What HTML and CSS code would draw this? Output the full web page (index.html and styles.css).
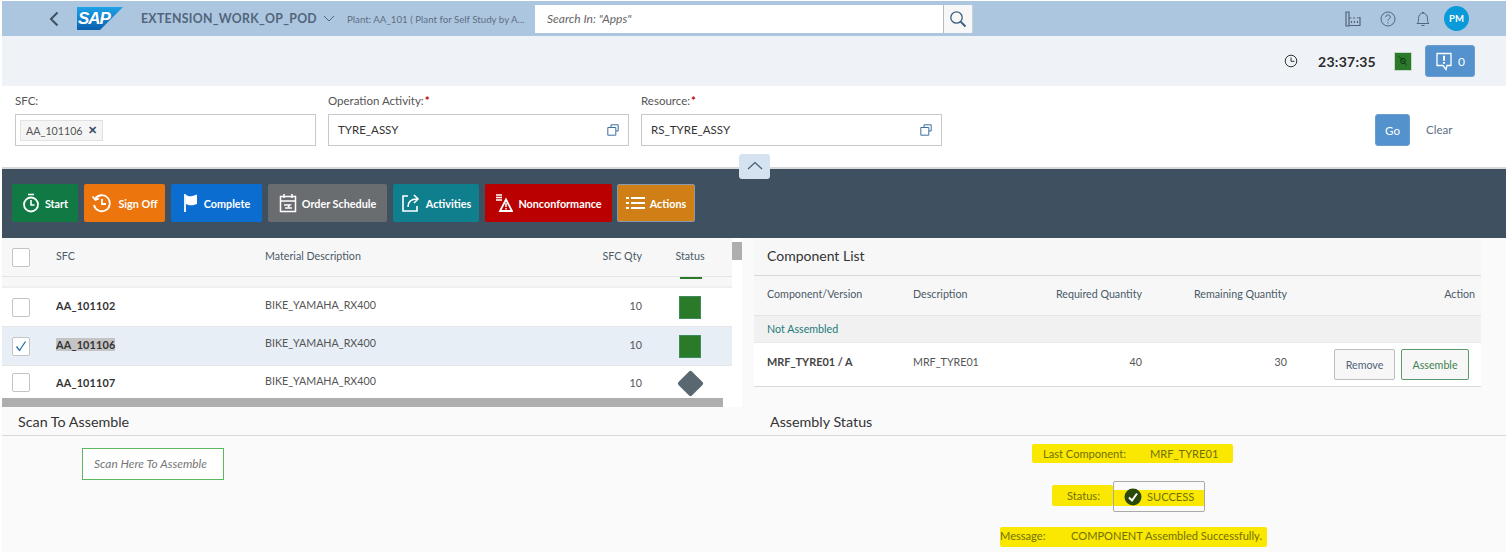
FILE: index.html
```html
<!DOCTYPE html>
<html lang="en">
<head>
<meta charset="utf-8">
<title>EXTENSION_WORK_OP_POD</title>
<link rel="stylesheet" href="styles.css">
</head>
<body>
<div class="page">
  <header class="shell">
    <svg class="back" viewBox="0 0 10 16" width="10" height="16"><path d="M8.5 1.5 2 8l6.5 6.5" fill="none" stroke="#3f5060" stroke-width="2"/></svg>
    <svg class="logo" viewBox="0 0 46 23" width="46" height="23">
      <defs><linearGradient id="sapg" x1="0" y1="0" x2="0" y2="1"><stop offset="0" stop-color="#1ea3e6"/><stop offset="1" stop-color="#0a5fb0"/></linearGradient></defs>
      <polygon points="0,0 46,0 23,23 0,23" fill="url(#sapg)"/>
      <text x="1" y="17" class="logo-text">SAP</text>
    </svg>
    <span class="app-title">EXTENSION_WORK_OP_POD</span>
    <svg class="title-caret" viewBox="0 0 12 7" width="12" height="7"><path d="M1 1l5 5 5-5" fill="none" stroke="#52657a" stroke-width="1"/></svg>
    <span class="plant">Plant: AA_101 ( Plant for Self Study by A...</span>
    <div class="search">
      <span class="search-text">Search In: "Apps"</span>
      <span class="search-btn"><svg viewBox="0 0 18 18" width="18" height="18"><circle cx="7.5" cy="7.5" r="5.7" fill="none" stroke="#3f5f80" stroke-width="1.3"/><path d="M11.6 11.6 16.5 16.5" stroke="#3f5f80" stroke-width="2"/></svg></span>
    </div>
    <div class="shell-right">
      <svg class="ic-factory" viewBox="0 0 16 16" width="16" height="16"><path d="M1 1h3v14H1zM4 14.500h11V6.500h-1.500M4 7h2.500M8 7h2M12 7h1M6.500 10v2M9.500 10v2M12.500 10v2" fill="none" stroke="#52657a" stroke-width="1.200"/></svg>
      <svg class="ic-help" viewBox="0 0 16 16" width="16" height="16"><circle cx="8" cy="8" r="7" fill="none" stroke="#52657a"/><path d="M5.800 6.200c0-3 4.500-3 4.500-.2 0 1.800-2.300 1.800-2.300 3.800M8 11.200v1.300" fill="none" stroke="#52657a"/></svg>
      <svg class="ic-bell" viewBox="0 0 14 16" width="14" height="16"><path d="M1 12.500c1.500-1 1.500-2.500 1.500-5C2.500 4.500 4.500 2 7 2s4.500 2.500 4.500 5.500c0 2.500 0 4 1.500 5zM6 1.500h2M5.500 14.500h3" fill="none" stroke="#52657a"/></svg>
      <span class="avatar">PM</span>
    </div>
  </header>

  <div class="subheader">
    <svg viewBox="0 0 14 14" width="14" height="14"><circle cx="7" cy="7" r="5.800" fill="none" stroke="#333"/><path d="M7 3.500V7.300H10.500" fill="none" stroke="#333"/></svg>
    <span class="clock">23:37:35</span>
    <span class="conn"><svg viewBox="0 0 18 18" width="18" height="18"><path d="M4 3 14 15" stroke="#12301a"/><ellipse cx="9" cy="9" rx="3" ry="3.500" fill="none" stroke="#12301a" stroke-width="1.200"/></svg></span>
    <button class="msg-btn"><svg viewBox="0 0 18 19" width="18" height="19"><path d="M2 1.500h14v12h-4l-1 4-3-4H2z" fill="none" stroke="#fff" stroke-width="1.300"/><path d="M9 3.800v5M9 10v1.800" stroke="#fff" stroke-width="2"/></svg><span>0</span></button>
  </div>

  <section class="filter">
    <div class="field">
      <label class="field-label">SFC:</label>
      <div class="input"><span class="token">AA_101106 <b class="token-x">✕</b></span></div>
    </div>
    <div class="field">
      <label class="field-label">Operation Activity:<em class="req">*</em></label>
      <div class="input"><span class="value">TYRE_ASSY</span><svg class="vh" viewBox="0 0 12 12" width="12" height="12"><path d="M4 3V.8h7.200V7H9M.8 3.500h8v7.700h-8z" fill="none" stroke="#3f6f9f"/></svg></div>
    </div>
    <div class="field">
      <label class="field-label">Resource:<em class="req">*</em></label>
      <div class="input"><span class="value">RS_TYRE_ASSY</span><svg class="vh" viewBox="0 0 12 12" width="12" height="12"><path d="M4 3V.8h7.200V7H9M.8 3.500h8v7.700h-8z" fill="none" stroke="#3f6f9f"/></svg></div>
    </div>
    <div class="filter-actions">
      <button class="go">Go</button>
      <span class="clear">Clear</span>
    </div>
  </section>
  <div class="rule"></div>
  <button class="collapse"><svg viewBox="0 0 16 9" width="16" height="9"><path d="M1 8 8 1.500 15 8" fill="none" stroke="#42586e" stroke-width="1.100"/></svg></button>

  <nav class="toolbar">
    <button class="act a-start"><svg viewBox="0 0 18 20" width="18" height="20"><circle cx="9" cy="11.500" r="7" fill="none" stroke="#fff" stroke-width="1.800"/><path d="M6 1.500h6M9 7v5h3.500" fill="none" stroke="#fff" stroke-width="1.600"/></svg>Start</button>
    <button class="act a-sign"><svg viewBox="0 0 22 20" width="22" height="20"><path d="M4 6a8 8 0 1 1-1 6M1.500 3.500 4.500 7 8 5.500M11 6v5h4" fill="none" stroke="#fff" stroke-width="1.800"/></svg>Sign Off</button>
    <button class="act a-complete"><svg viewBox="0 0 16 20" width="16" height="20"><path d="M2 1v18" stroke="#fff" stroke-width="1.800"/><path d="M3 2c3 1.500 5 2 11-.5V11c-5 2-8 1.500-11 0z" fill="#fff"/></svg>Complete</button>
    <button class="act a-order"><svg viewBox="0 0 18 20" width="18" height="20"><path d="M1.500 3.500h15v15h-15zM1.500 8h15M5 1v4M13 1v4M5 12h6l-2 2M13 15H6" fill="none" stroke="#fff" stroke-width="1.500"/></svg>Order Schedule</button>
    <button class="act a-activity"><svg viewBox="0 0 20 20" width="20" height="20"><path d="M7 3H2v15h14v-5M7 14c0-5 3-8 9-8M13 2l4 4-4 4" fill="none" stroke="#fff" stroke-width="1.600"/></svg>Activities</button>
    <button class="act a-nc"><svg viewBox="0 0 18 18" width="18" height="18"><path d="M1 1h6M1 3.500h6M1 6h6" stroke="#fff" stroke-width="1.500"/><path d="M11 5.500 17 17H5z" fill="none" stroke="#fff" stroke-width="1.800"/><path d="M11 9v4M11 14v1.600" stroke="#fff" stroke-width="1.500"/></svg>Nonconformance</button>
    <button class="act a-actions"><svg viewBox="0 0 19 14" width="19" height="14"><path d="M0 2h3M0 7h3M0 12h3M5 2h14M5 7h14M5 12h14" stroke="#fff" stroke-width="2"/></svg>Actions</button>
  </nav>

  <div class="panels">
    <div class="worklist">
      <div class="wl-main">
        <div class="wl-row wl-head">
          <span class="cb"></span><span class="hd">SFC</span><span class="hd">Material Description</span><span class="hd num">SFC Qty</span><span class="hd center">Status</span>
        </div>
        <div class="wl-clip"><span class="clip-mark"></span></div>
        <div class="wl-row wl-item">
          <span class="cb"></span><strong>AA_101102</strong><span class="mat">BIKE_YAMAHA_RX400</span><span class="num">10</span><span class="center"><i class="sq"></i></span>
        </div>
        <div class="wl-row wl-item selected">
          <span class="cb"><svg viewBox="0 0 12 12" width="12" height="12"><path d="M1.500 6.500 4.500 10.500 10.500 1.500" fill="none" stroke="#2b6ca3" stroke-width="1.300"/></svg></span><strong><mark class="sel-text">AA_101106</mark></strong><span class="mat">BIKE_YAMAHA_RX400</span><span class="num">10</span><span class="center"><i class="sq"></i></span>
        </div>
        <div class="wl-row wl-item last">
          <span class="cb"></span><strong>AA_101107</strong><span class="mat">BIKE_YAMAHA_RX400</span><span class="num">10</span><span class="center"><i class="diamond"></i></span>
        </div>
        <div class="hscroll"></div>
      </div>
      <div class="vscroll"><i></i></div>
    </div>

    <div class="components">
      <div class="cp-title">Component List</div>
      <div class="cp-row cp-head"><span>Component/Version</span><span>Description</span><span class="num">Required Quantity</span><span class="num">Remaining Quantity</span><span class="num">Action</span></div>
      <div class="cp-group">Not Assembled</div>
      <div class="cp-row cp-item"><strong>MRF_TYRE01 / A</strong><span>MRF_TYRE01</span><span class="num">40</span><span class="num">30</span>
        <span class="cp-actions"><button class="btn-plain">Remove</button><button class="btn-green">Assemble</button></span>
      </div>
    </div>
  </div>

  <div class="heads">
    <h2 class="head-l">Scan To Assemble</h2>
    <h2 class="head-r">Assembly Status</h2>
  </div>

  <div class="bottom">
    <div class="scan-col"><div class="scan">Scan Here To Assemble</div></div>
    <div class="status-col">
      <div class="line-last"><mark class="hl hl-last"><span class="k-last">Last Component:</span>MRF_TYRE01</mark></div>
      <div class="line-status"><mark class="hl hl-status"><span class="k-status">Status:</span></mark><span class="status-box"><svg viewBox="0 0 18 18" width="18" height="18"><circle cx="9" cy="9" r="8.500" fill="#2a4a08"/><path d="M5 9.500 8 12.500 13 5.500" fill="none" stroke="#fff" stroke-width="2"/></svg>SUCCESS</span></div>
      <div class="line-msg"><mark class="hl hl-msg"><span class="k-msg">Message:</span>COMPONENT Assembled Successfully.</mark></div>
    </div>
  </div>
</div>
</body>
</html>
```
FILE: styles.css
```css
* { box-sizing: border-box; }
html, body { margin: 0; padding: 0; }
body { background: #fff; font-family: Lato, "Open Sans", "Liberation Sans", sans-serif; font-size: 10.700px; color: #333; }
button { font-family: inherit; cursor: pointer; }
.page { position: relative; width: 1506px; height: 552px; overflow: hidden; padding: 1px 0 0 2px; }

/* shell bar */
.shell { height: 35px; background: #adc6e0; display: flex; align-items: center; position: relative; }
.back { margin-left: 47px; }
.logo { margin-left: 18px; }
.logo-text { font: italic bold 17px "Liberation Sans", sans-serif; fill: #fff; letter-spacing: -1px; }
.app-title { margin-left: 18px; font-size: 12.300px; font-weight: 700; color: #52657a; letter-spacing: .3px; white-space: nowrap; width: 182px; }
.title-caret { margin-left: 0; }
.plant { margin-left: 12px; width: 188px; font-size: 9.700px; color: #5d6f82; white-space: nowrap; }
.search { margin-left: 0; width: 438px; height: 28px; background: #fff; display: flex; align-items: center; justify-content: space-between; }
.search-text { padding-left: 12px; font-style: italic; color: #666; font-size: 12px; }
.search-btn { width: 30px; height: 28px; background: #f7f7f7; border-left: 1px solid #bbb; border-right: 1px solid #c8d0d8; display: flex; align-items: center; justify-content: center; }
.shell-right { margin-left: auto; display: flex; align-items: center; padding-right: 37px; }
.ic-help { margin-left: 19px; }
.ic-bell { margin-left: 20px; }
.avatar { margin-left: 14px; width: 25px; height: 25px; border-radius: 50%; background: #0a9ad9; color: #fff; font-size: 9.500px; font-weight: 700; display: flex; align-items: center; justify-content: center; }

/* sub header */
.subheader { height: 50px; background: #eff3f8; display: flex; align-items: center; padding: 0 31px 0 0; justify-content: flex-end; }
.clock { margin-left: 20px; font-size: 14px; font-weight: 700; color: #2b2b2b; letter-spacing: .25px; }
.conn { margin-left: 18px; width: 18px; height: 19px; background: #2a7a2a; border: 1px solid #c8d8c8; display: flex; align-items: center; justify-content: center; }
.conn svg { width: 14px; height: 14px; }
.msg-btn { margin-left: 13px; width: 50px; height: 32px; background: #5392cc; border: 1px solid #6a9fd0; border-radius: 3px; color: #fff; font-size: 12px; display: flex; align-items: center; justify-content: center; gap: 5px; padding: 0; }

/* filter bar */
.filter { width: 1492px; height: 81px; background: #fff; display: flex; padding: 8px 0 0 13px; gap: 12px; }
.field { width: 301px; display: flex; flex-direction: column; }
.field-label { height: 20px; font-size: 11.500px; color: #555; line-height: 13px; }
.req { color: #b00; font-style: normal; font-weight: 700; margin-left: 1px; }
.input { height: 32px; border: 1px solid #c9c9c9; display: flex; align-items: center; justify-content: space-between; padding: 0 9px; }
.value { font-size: 11.500px; color: #333; padding-bottom: 2px; }
.token { margin-left: -5px; height: 21px; padding: 0 5px; background: #f5f5f5; border: 1px solid #e2e2e2; font-size: 10.700px; color: #555; display: flex; align-items: center; gap: 5px; }
.token-x { font-size: 11px; color: #3a4f66; }
.filter-actions { margin-left: 421px; padding-top: 20px; display: flex; align-items: flex-start; }
.go { width: 35px; height: 32px; background: #5392cc; border: 1px solid #6a9fd0; border-radius: 3px; color: #fff; font-size: 11.500px; padding: 0; }
.clear { margin: 9px 0 0 16px; color: #5d6f82; font-size: 11.500px; }
.rule { height: 2px; background: #d9d9d9; }
.collapse { position: absolute; left: 739px; top: 154px; width: 31px; height: 25px; background: #d5e2ef; border: 0; border-radius: 3px; display: flex; align-items: flex-start; justify-content: center; padding: 7px 0 0; }

/* action toolbar */
.toolbar { height: 69px; background: #3f5060; display: flex; align-items: flex-start; gap: 6px; padding: 15px 0 0 10px; }
.act { height: 38px; border: 0; border-radius: 2px; color: #fff; font-size: 10.800px; font-weight: 700; display: flex; align-items: center; justify-content: center; gap: 5px; padding: 0; white-space: nowrap; }
.a-start { width: 66px; background: #117a44; }
.a-sign { width: 81px; background: #ec750e; }
.a-complete { width: 91px; background: #0b6dd0; }
.a-order { width: 119px; background: #6a6d70; }
.a-activity { width: 86px; background: #0f7f8e; }
.a-nc { width: 127px; background: #bb0000; }
.a-actions { width: 78px; margin-left: -1px; background: #cf7f16; border: 1px solid #8a9aa8; }

/* panels */
.panels { height: 170px; display: flex; background: #fafafa; }
.worklist { width: 740px; height: 169px; display: flex; background: #fff; }
.wl-main { width: 730px; position: relative; }
.vscroll { width: 10px; height: 169px; }
.vscroll i { display: block; width: 10px; height: 18px; margin-top: 4px; background: #aeaeae; }
.wl-row { display: grid; grid-template-columns: 44px 209px 1fr 60px 78px; align-items: center; padding: 0 3px 0 10px; color: #4a5a68; }
.wl-row .num { padding-right: 9px; white-space: nowrap; }
.wl-head { height: 39px; background: #f7f7f7; border-bottom: 1px solid #e5e5e5; }
.hd { margin-top: -3px; }
.wl-clip { height: 11px; background: #f7f7f7; border-bottom: 2px solid #efefef; display: flex; justify-content: flex-end; padding-right: 30px; }
.clip-mark { width: 22px; height: 2px; background: #2a7a2a; }
.wl-item { height: 39px; border-bottom: 1px solid #e5e5e5; color: #555; }
.wl-item strong { color: #333; font-size: 10.800px; letter-spacing: .2px; margin-top: -4px; }
.wl-item .num { margin-top: -4px; color: #555; }
.wl-item .mat { margin-top: -6px; }
.wl-item.selected .mat { margin-top: -8px; }
.wl-item.last { height: 33px; border-bottom: 0; }
.wl-item.last strong, .wl-item.last .num { margin-top: 0; }
.wl-item.last .mat { margin-top: -4px; }
.selected { background: #e7eef6; }
.sel-text { background: #c4c4c4; color: #333; }
.num { text-align: right; }
.center { display: flex; justify-content: center; }
.cb { width: 18px; height: 19px; background: #fff; border: 1.500px solid #c4c4c4; border-radius: 2px; display: flex; align-items: center; justify-content: center; }
.sq { display: block; width: 22px; height: 23px; background: #2a7a2a; border: 1px solid #3d8a5a; }
.diamond { display: block; width: 19px; height: 19px; background: #596870; transform: rotate(45deg); border-radius: 2px; margin-top: 1px; }
.hscroll { position: absolute; left: 0; top: 160px; width: 721px; height: 9px; background: #aeaeae; }

.components { margin-left: 12px; width: 727px; }
.cp-title { height: 38px; border-bottom: 1px solid #d9d9d9; background: #f7f7f7; font-size: 14px; color: #333; line-height: 36px; padding-left: 13px; }
.cp-row { display: grid; grid-template-columns: 146px 1fr 145px 145px 188px; align-items: center; padding: 0 6px 0 13px; }
.cp-head { height: 40px; background: #f7f7f7; border-bottom: 1px solid #e5e5e5; color: #4a5a68; padding-bottom: 5px; }
.cp-group { height: 27px; background: #f1f1f1; color: #1d7a7a; line-height: 26px; padding-left: 13px; border-bottom: 1px solid #eaeaea; }
.cp-item { height: 44px; background: #fff; border-bottom: 1px solid #d9d9d9; color: #555; }
.cp-item > span:not(.cp-actions), .cp-item > strong { margin-top: -7px; }
.cp-item strong { color: #444; font-size: 10.900px; }
.cp-actions { display: flex; justify-content: flex-end; gap: 6px; margin-top: -1px; margin-right: 6px; }
.cp-actions button { height: 31px; font-size: 10.700px; padding: 0; border-radius: 2px; }
.btn-plain { width: 61px; background: #f7f7f7; border: 1px solid #bdbdbd; color: #4f6378; }
.btn-green { width: 68px; background: #f7f7f7; border: 1px solid #5a9a6a; color: #3f7f4f; }

.heads { height: 28px; background: #fafafa; border-bottom: 1px solid #d9d9d9; display: flex; align-items: center; }
.heads h2 { margin: 0; font-size: 14.300px; font-weight: 400; color: #333; }
.head-l { padding-left: 16px; width: 768px; }

.bottom { height: 116px; background: #fafafa; display: flex; }
.scan-col { width: 740px; padding: 12px 0 0 80px; }
.scan { width: 142px; height: 32px; background: #fff; border: 1px solid #5cb85c; font-style: italic; font-size: 11.900px; color: #777; line-height: 30px; padding-left: 11px; white-space: nowrap; }
.status-col { position: relative; flex: 1; font-size: 11.100px; }
.line-last { padding: 8px 0 0 290px; height: 45px; }
.line-status { height: 44px; display: flex; align-items: flex-start; padding-left: 310px; }
.line-msg { padding-left: 258px; padding-top: 2px; }
.hl { display: inline-flex; align-items: center; background: #fbe800; color: #70700a; white-space: nowrap; border-radius: 2px; }
.hl-last { height: 19px; width: 201px; }
.k-last { margin-left: 11px; width: 107px; }
.hl-status { height: 21px; width: 61px; margin-top: 4px; }
.k-status { margin-left: 15px; }
.status-box { width: 92px; height: 31px; margin-left: 0; border: 1px solid #a9a9a9; border-radius: 2px; background: linear-gradient(#fbe800, #fbe800) no-repeat 0 8px / 100% 16px; color: #70700a; display: flex; align-items: center; gap: 5px; padding-left: 10px; }
.hl-msg { height: 20px; width: 267px; padding-bottom: 3px; }
.k-msg { width: 71px; }
```
